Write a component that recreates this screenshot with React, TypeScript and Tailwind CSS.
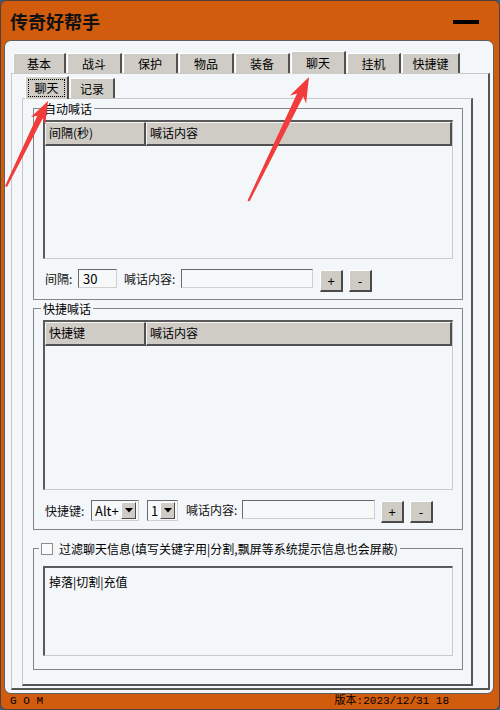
import React from "react";

const mainTabs = [
  { label: "基本", w: "w-[53px]" },
  { label: "战斗", w: "w-[55px]" },
  { label: "保护", w: "w-[55px]" },
  { label: "物品", w: "w-[55px]" },
  { label: "装备", w: "w-[55px]" },
  { label: "聊天", w: "w-[55px]", active: true },
  { label: "挂机", w: "w-[54px]" },
  { label: "快捷键", w: "w-[58px]" },
];

function Btn({ label }: { label: string }) {
  return (
    <div className="w-[23px] h-[22px] mt-px bg-[#CFCCC6] border-t border-l border-white border-r-2 border-b-2 border-r-[#4a4a4a] border-b-[#4a4a4a] flex items-center justify-center text-[13px] leading-none text-black">
      {label}
    </div>
  );
}

function Field({ w, value }: { w: string; value?: string }) {
  return (
    <div
      className={`${w} h-[19px] border-t border-l border-[#6a6a6a] border-r border-b border-r-[#cfcfcf] border-b-[#cfcfcf] bg-[#F6F8FA] pl-[4px] text-[13px] leading-[17px] text-black`}
    >
      {value}
    </div>
  );
}

function Combo({ w, value }: { w: string; value: string }) {
  return (
    <div
      className={`${w} h-[21px] border-t border-l border-[#6a6a6a] border-r border-b border-r-[#cfcfcf] border-b-[#cfcfcf] bg-[#F6F8FA] flex p-[1px]`}
    >
      <div className="flex-1 pl-[2px] text-[13px] leading-[18px] text-black">{value}</div>
      <div className="w-[15px] h-[17px] mr-px bg-[#CFCCC6] border-t border-l border-white border-r border-b border-r-[#4a4a4a] border-b-[#4a4a4a] flex items-center justify-center">
        <svg width="8" height="5" viewBox="0 0 8 5">
          <polygon points="0,0 8,0 4,4.5" fill="#000" />
        </svg>
      </div>
    </div>
  );
}

function ListBox({ h, cols }: { h: string; cols: [string, string] }) {
  return (
    <div
      className={`ml-[9px] w-[410px] ${h} border-t-2 border-l-2 border-[#5a5a5a] border-r border-b border-r-[#cacaca] border-b-[#cacaca] bg-[#F4F7FA]`}
    >
      <div className="flex h-[24px]">
        <div className="w-[101px] bg-[#CFCCC6] border-t border-l border-[#f4f4f4] border-r-2 border-b-2 border-r-[#505050] border-b-[#505050] pl-[3px] text-[12px] leading-[20px] text-black">
          {cols[0]}
        </div>
        <div className="flex-1 bg-[#CFCCC6] border-t border-l border-[#f4f4f4] border-r-2 border-b-2 border-r-[#505050] border-b-[#505050] pl-[3px] text-[12px] leading-[20px] text-black">
          {cols[1]}
        </div>
      </div>
    </div>
  );
}

export default function App() {
  return (
    <div className="w-[500px] h-[710px] bg-[#3a5c80] font-['Noto_Sans_CJK_SC','Noto_Sans',sans-serif]">
      <div className="relative w-[500px] h-[710px] bg-[#D25C0D] border border-[#4f4038] rounded-[6px] flex flex-col overflow-hidden">
        {/* title bar */}
        <div className="h-[39px] flex items-center justify-between pl-[9px] pr-[20px]">
          <span className="text-[18px] font-bold text-[#111] leading-none">传奇好帮手</span>
          <div className="w-[26px] h-[4px] bg-black mt-[3px]" />
        </div>

        {/* client area */}
        <div className="ml-[3px] w-[490px] h-[654px] bg-[#F4F7FA] border border-[#5e5e5e] rounded-[7px]">
          {/* main tabs */}
          <div className="pt-[10px] pl-[8px] h-[32px] flex items-end gap-[1px]">
            {mainTabs.map((t) => (
              <div
                key={t.label}
                className={`${t.w} ${t.active ? "h-[23px] -mb-px relative z-10" : "h-[20px]"} bg-[#CFCCC6] border-t border-l border-white border-r-2 border-r-[#505050] flex items-center justify-center text-[12px] text-black`}
              >
                {t.label}
              </div>
            ))}
          </div>

          {/* main tab panel */}
          <div className="ml-[6px] w-[479px] h-[617px] border-t border-l border-[#c8c8c8] border-r-2 border-b-2 border-r-[#555] border-b-[#555] pt-[2px]">
            {/* sub tabs */}
            <div className="h-[22px] pl-[13px] flex items-end gap-[1px]">
              <div className="w-[44px] h-[23px] -mb-px relative z-10 bg-[#CFCCC6] border-t border-l border-white border-r-2 border-r-[#505050] p-[2px]">
                <div className="w-full h-full border border-dotted border-black flex items-center justify-center text-[12px] text-black">
                  聊天
                </div>
              </div>
              <div className="w-[45px] h-[20px] bg-[#CFCCC6] border-t border-l border-white border-r-2 border-r-[#505050] flex items-center justify-center text-[12px] text-black">
                记录
              </div>
            </div>

            {/* sub tab panel */}
            <div className="ml-[10px] w-[451px] h-[588px] border-t border-l border-[#c8c8c8] border-r-2 border-b-2 border-r-[#555] border-b-[#555] pt-[9px]">
              {/* 自动喊话 */}
              <div className="relative ml-[10px] w-[430px] h-[192px] border border-[#858585] pt-[11px]">
                <span className="absolute -top-[9px] left-[8px] px-[2px] bg-[#F4F7FA] text-[12px] leading-[17px] text-black">
                  自动喊话
                </span>
                <ListBox h="h-[139px]" cols={["间隔(秒)", "喊话内容"]} />
                <div className="mt-[10px] ml-[11px] flex items-start text-[12px] text-[#111]">
                  <span className="w-[33px] leading-[19px]">间隔:</span>
                  <Field w="w-[39px]" value="30" />
                  <span className="ml-[7px] w-[57px] leading-[19px]">喊话内容:</span>
                  <Field w="w-[132px]" />
                  <div className="ml-[7px]">
                    <Btn label="+" />
                  </div>
                  <div className="ml-[6px]">
                    <Btn label="-" />
                  </div>
                </div>
              </div>

              {/* 快捷喊话 */}
              <div className="relative mt-[8px] ml-[10px] w-[430px] h-[222px] border border-[#858585] pt-[11px]">
                <span className="absolute -top-[9px] left-[7px] px-[2px] bg-[#F4F7FA] text-[12px] leading-[17px] text-black">
                  快捷喊话
                </span>
                <ListBox h="h-[170px]" cols={["快捷键", "喊话内容"]} />
                <div className="mt-[10px] ml-[11px] flex items-start text-[12px] text-[#111]">
                  <span className="w-[46px] leading-[21px]">快捷键:</span>
                  <Combo w="w-[48px]" value="Alt+" />
                  <div className="ml-[8px]">
                    <Combo w="w-[31px]" value="1" />
                  </div>
                  <span className="ml-[8px] w-[56px] leading-[19px]">喊话内容:</span>
                  <Field w="w-[133px]" />
                  <div className="ml-[6px]">
                    <Btn label="+" />
                  </div>
                  <div className="ml-[6px]">
                    <Btn label="-" />
                  </div>
                </div>
              </div>

              {/* 过滤聊天信息 */}
              <div className="relative mt-[18px] ml-[10px] w-[430px] h-[122px] border border-[#858585] pt-[17px]">
                <div className="absolute -top-[9px] left-[5px] px-[2px] bg-[#F4F7FA] flex items-center h-[17px]">
                  <div className="w-[12px] h-[12px] border border-[#8c8c8c] bg-[#fbfbfb]" />
                  <span className="ml-[6px] text-[12px] leading-[17px] text-black">
                    过滤聊天信息(填写关键字用|分割,飘屏等系统提示信息也会屏蔽)
                  </span>
                </div>
                <div className="ml-[9px] w-[410px] h-[90px] border-t-2 border-l-2 border-[#5a5a5a] border-r border-b border-r-[#cacaca] border-b-[#cacaca] bg-[#F4F7FA] pl-[4px] pt-[5px] text-[12px] leading-[17px] text-black">
                  掉落|切割|充值
                </div>
              </div>
            </div>
          </div>
        </div>

        {/* status bar */}
        <div className="h-[15px] flex items-center pl-[9px] pr-[50px] font-['Liberation_Mono','Noto_Sans_CJK_SC',monospace] text-[11px] leading-[15px] text-black">
          <span className="whitespace-pre">G O M</span>
          <span className="ml-auto whitespace-pre">版本:2023/12/31 18</span>
        </div>

        {/* red annotation arrows */}
        <svg className="absolute inset-0 pointer-events-none" width="500" height="710" viewBox="0 0 500 710">
          <polygon
            points="47,100 44.3,123.3 41.7,117.4 6,186 4,185 36.3,114.8 30,116.1"
            fill="#F23B3B"
          />
          <polygon
            points="308,76 305.1,102.4 302.3,95.5 248.5,200.5 246.5,199.5 296.1,92.5 288.9,94.4"
            fill="#F23B3B"
          />
        </svg>
      </div>
    </div>
  );
}
